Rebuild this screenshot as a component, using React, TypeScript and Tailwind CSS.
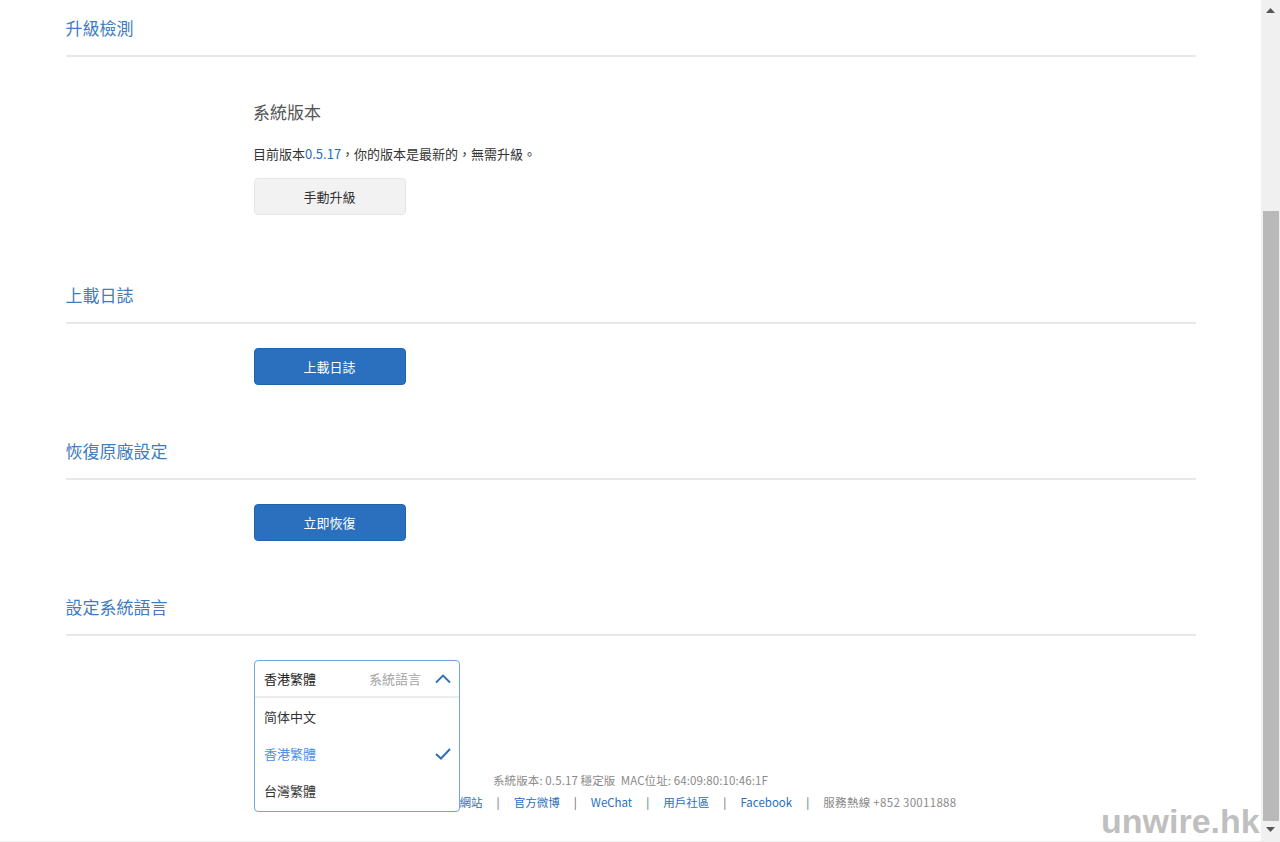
import React from 'react';

const Section = ({ title, children }: { title: string; children: React.ReactNode }) => (
  <section>
    <h2 className="h-[57px] border-b-2 border-[#e8e8e8] pt-[15px] text-[17px] leading-[26px] text-[#3f7cc0] -indent-[0.5px]">{title}</h2>
    <div className="pl-[188px]">{children}</div>
  </section>
);

const LanguageSelect = () => (
  <div className="absolute top-[-1px] left-0 z-10 h-[152px] w-[206px] rounded-[4px] border border-[#6fa5e4] bg-white text-[13px] text-[#333]">
    <div className="flex h-[37px] items-center border-b-2 border-[#ececec] pl-[9px] pr-[8px]">
      <span className="text-[#222]">香港繁體</span>
      <span className="ml-auto mr-[14px] text-[#a5a5a5]">系統語言</span>
      <svg width="16" height="10" viewBox="0 0 16 10" fill="none" stroke="#2f6fb5" strokeWidth="1.8">
        <path d="M1 8.5 8 1.5l7 7" />
      </svg>
    </div>
    <div className="flex h-[37px] items-center pl-[9px]">简体中文</div>
    <div className="flex h-[37px] items-center justify-between pl-[9px] pr-[8px] text-[#4a90e8]">
      <span>香港繁體</span>
      <svg width="16" height="12" viewBox="0 0 16 12" fill="none" stroke="#2f6fb5" strokeWidth="2">
        <path d="M1 6l5 4.5L15 1" />
      </svg>
    </div>
    <div className="flex h-[37px] items-center pl-[9px]">台灣繁體</div>
  </div>
);

const Sep = () => <span className="text-[#666]">|</span>;

const App: React.FC = () => {
  return (
    <div className="relative flex h-[842px] w-[1280px] overflow-hidden bg-white font-['Noto_Sans_CJK_TC','Noto_Sans',sans-serif]">
      <main className="w-[1261px] shrink-0 border-b border-[#eee]">
        <div className="ml-[66px] w-[1130px]">
          <Section title="升級檢測">
            <h3 className="mt-[42px] -ml-[1px] text-[17px] leading-[26px] text-[#555]">系統版本</h3>
            <p className="mt-[19px] -ml-[1px] text-[13px] leading-[20px] text-[#333]">
              目前版本<span className="text-[#2a6ebb]">0.5.17</span>，你的版本是最新的，無需升級。
            </p>
            <button className="mt-[14px] block h-[37px] w-[152px] rounded-[4px] border border-[#e6e6e6] bg-[#f2f2f2] pr-[1px] text-[13px] text-[#333]">
              手動升級
            </button>
          </Section>

          <div className="mt-[52px]">
            <Section title="上載日誌">
              <button className="mt-[24px] block h-[37px] w-[152px] rounded-[4px] border border-[#2264a8] bg-[#2a70bf] pr-[1px] text-[13px] text-white">
                上載日誌
              </button>
            </Section>
          </div>

          <div className="mt-[38px]">
            <Section title="恢復原廠設定">
              <button className="mt-[24px] block h-[37px] w-[152px] rounded-[4px] border border-[#2264a8] bg-[#2a70bf] pr-[1px] text-[13px] text-white">
                立即恢復
              </button>
            </Section>
          </div>

          <div className="mt-[38px]">
            <Section title="設定系統語言">
              <div className="relative mt-[25px] h-[60px]">
                <LanguageSelect />
              </div>
            </Section>
          </div>
        </div>

        <footer className="mt-[48px] text-center text-[11.5px] leading-[22px] text-[#8a8a8a]">
          <p className="tracking-[0.1px]">系統版本: 0.5.17 穩定版&nbsp;&nbsp;MAC位址: 64:09:80:10:46:1F</p>
          <p className="flex justify-center gap-[14px] pl-[132px] text-[#2a6ebb]">
            <span>官方網站</span>
            <Sep />
            <span>官方微博</span>
            <Sep />
            <span>WeChat</span>
            <Sep />
            <span>用戶社區</span>
            <Sep />
            <span>Facebook</span>
            <Sep />
            <span className="tracking-[0.3px] text-[#8a8a8a]">服務熱線 +852 30011888</span>
          </p>
        </footer>
      </main>

      <div className="flex h-[842px] w-[19px] shrink-0 flex-col items-center bg-[#f0f0f0]">
        <div className="flex h-[211px] w-full justify-center pt-[8px]">
          <svg width="9" height="5" viewBox="0 0 9 5" fill="#555"><path d="M4.5 0 9 5H0z" /></svg>
        </div>
        <div className="ml-[1px] h-[610px] w-[16px] bg-[#b9b9b9]" />
        <div className="flex w-full justify-center pt-[6px]">
          <svg width="9" height="5" viewBox="0 0 9 5" fill="#555"><path d="M4.5 5 9 0H0z" /></svg>
        </div>
      </div>

      <div className="absolute top-[799px] left-[1101px] z-20 font-['Liberation_Sans',sans-serif] text-[34px] leading-[44px] font-bold text-[#bfbfbf]">
        unwire.hk
      </div>
    </div>
  );
};

export default App;
